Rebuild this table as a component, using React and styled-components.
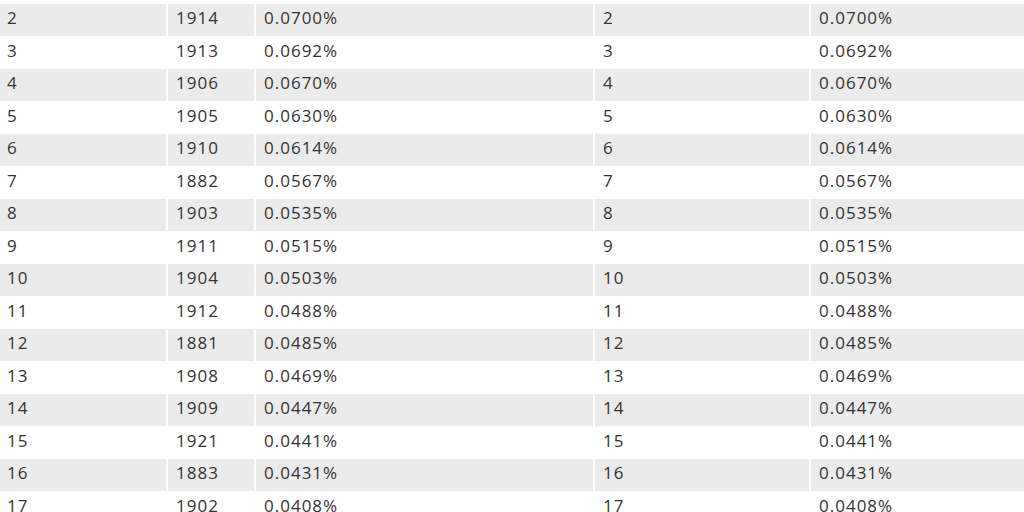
import styled, { createGlobalStyle } from "styled-components";

const GlobalStyle = createGlobalStyle`
  html, body {
    margin: 0;
    padding: 0;
    background: #ffffff;
  }
  body {
    font-family: "Open Sans", "Liberation Sans", Arial, sans-serif;
    color: #333333;
    overflow: hidden;
  }
`;

const Table = styled.div`
  display: grid;
  grid-template-columns: 166px 86px 337px 214px 1fr;
  column-gap: 2px;
  width: 1024px;
  padding-top: 3.5px;
`;

const Cell = styled.div`
  height: 32.5px;
  box-sizing: border-box;
  display: flex;
  align-items: center;
  padding-left: ${(p) => (p.$first ? "7px" : "8px")};
  padding-bottom: 4px;
  font-size: 17px;
  letter-spacing: 1px;
  line-height: 1;
  background-color: ${(p) => (p.$striped ? "#ebebeb" : "#ffffff")};
  white-space: nowrap;
`;

const rows = [
  [2, 1914, "0.0700%"],
  [3, 1913, "0.0692%"],
  [4, 1906, "0.0670%"],
  [5, 1905, "0.0630%"],
  [6, 1910, "0.0614%"],
  [7, 1882, "0.0567%"],
  [8, 1903, "0.0535%"],
  [9, 1911, "0.0515%"],
  [10, 1904, "0.0503%"],
  [11, 1912, "0.0488%"],
  [12, 1881, "0.0485%"],
  [13, 1908, "0.0469%"],
  [14, 1909, "0.0447%"],
  [15, 1921, "0.0441%"],
  [16, 1883, "0.0431%"],
  [17, 1902, "0.0408%"],
];

const App = () => {
  return (
    <>
      <GlobalStyle />
      <Table>
        {rows.map(([rank, year, share], index) => {
          const striped = index % 2 === 0;
          return [
            <Cell key={`${rank}-a`} $striped={striped} $first>{rank}</Cell>,
            <Cell key={`${rank}-b`} $striped={striped}>{year}</Cell>,
            <Cell key={`${rank}-c`} $striped={striped}>{share}</Cell>,
            <Cell key={`${rank}-d`} $striped={striped}>{rank}</Cell>,
            <Cell key={`${rank}-e`} $striped={striped}>{share}</Cell>,
          ];
        })}
      </Table>
    </>
  );
};

export default App;
